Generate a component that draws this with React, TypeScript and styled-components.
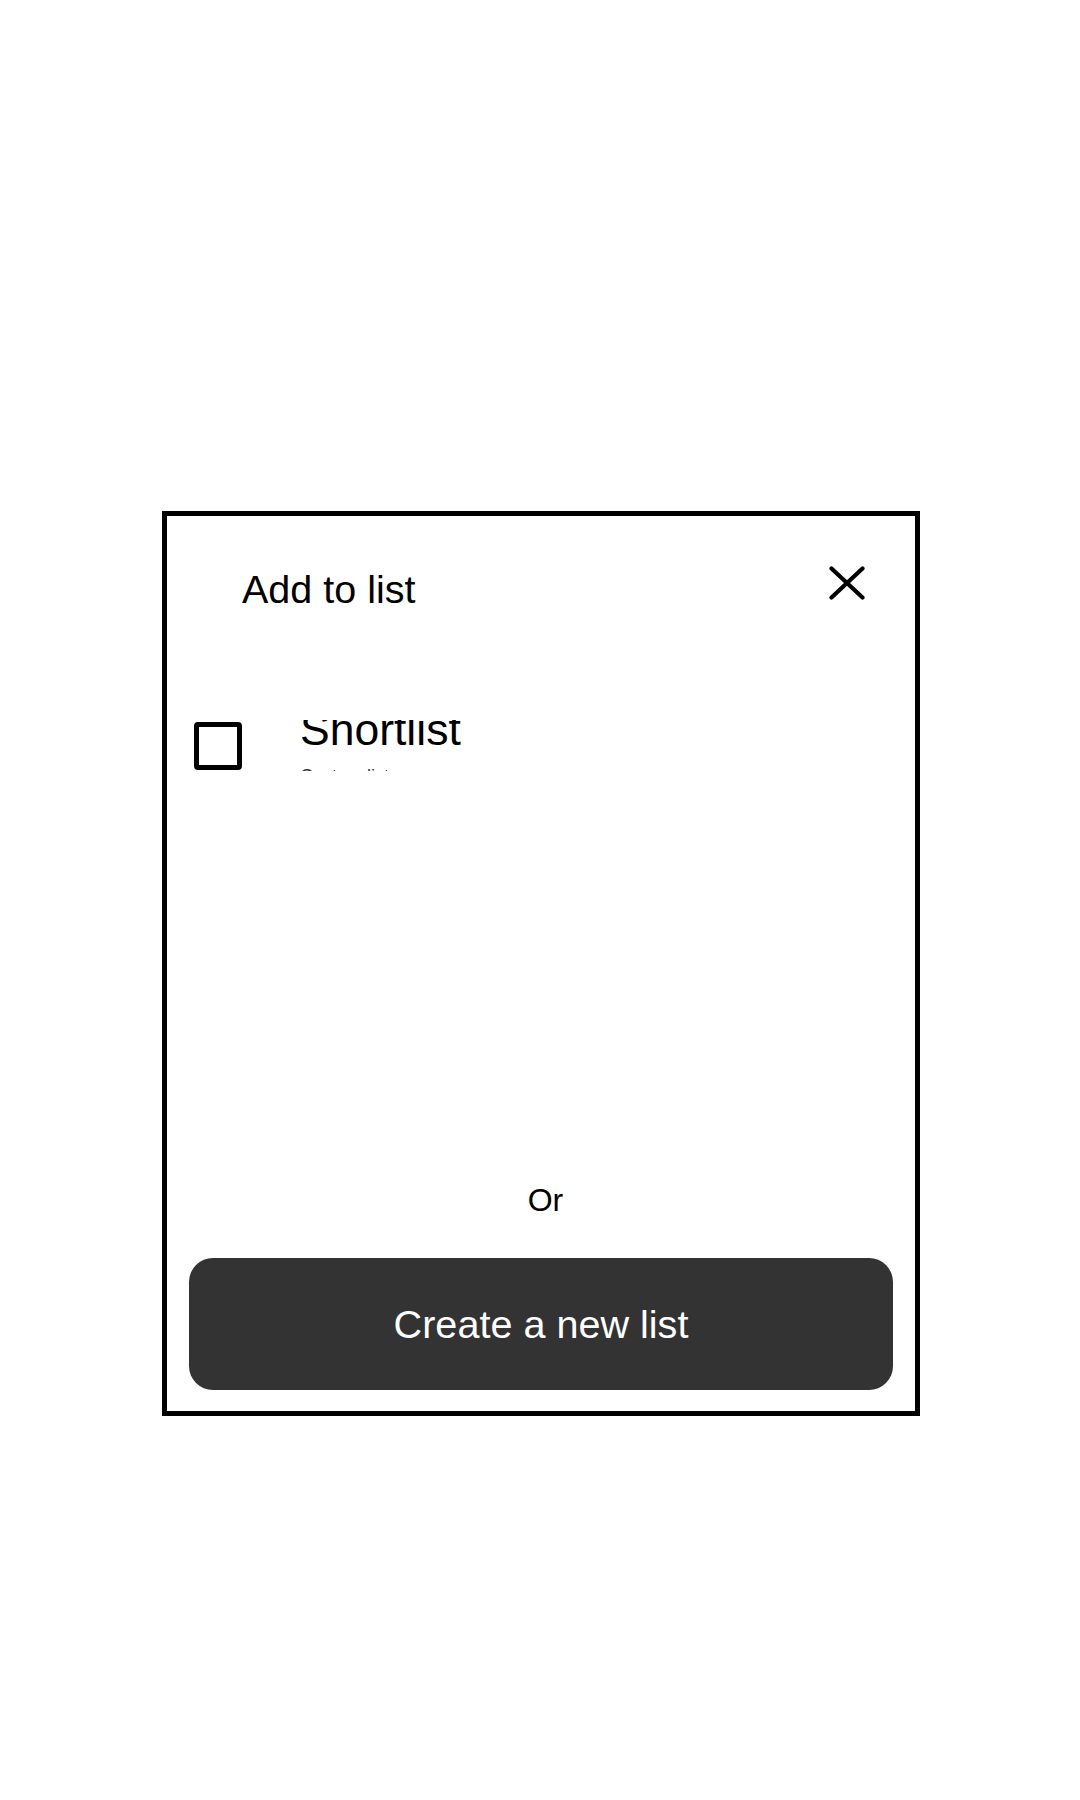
import { useState } from 'react';
import styled, { createGlobalStyle } from 'styled-components';

const GlobalStyle = createGlobalStyle`
    html, body {
        margin: 0;
        padding: 0;
        background: #fff;
    }
    body {
        font-family: 'Liberation Sans', Arial, sans-serif;
        color: #000;
    }
    * {
        box-sizing: border-box;
    }
`;

const Page = styled.div`
    min-height: 1800px;
    padding: 511px 0 0 2px;
    display: flex;
    justify-content: center;
    align-items: flex-start;
`;

const Dialog = styled.div`
    width: 758px;
    height: 905px;
    border: 5px solid #000;
    background: #fff;
    display: flex;
    flex-direction: column;
`;

const Header = styled.div`
    display: flex;
    justify-content: space-between;
    align-items: flex-start;
    padding: 51px 50px 0 75px;
`;

const Title = styled.h2`
    margin: 0;
    font-size: 39.5px;
    font-weight: 400;
    line-height: 45px;
`;

const CloseButton = styled.button`
    border: none;
    background: none;
    padding: 0;
    margin: -1px 0 0;
    width: 36px;
    height: 34px;
    cursor: pointer;
    display: flex;
`;

const ListHolder = styled.div`
    flex: 1;
    padding-top: 108px;
`;

const ListRow = styled.label`
    height: 51px;
    overflow: hidden;
    display: flex;
    align-items: flex-start;
    padding-left: 27px;
    gap: 58px;
    cursor: pointer;
`;

const CheckBox = styled.span<{ checked: boolean }>`
    flex: none;
    width: 48px;
    height: 48px;
    margin-top: 1.5px;
    border: 5px solid #000;
    border-radius: 4px;
    background: ${props => (props.checked ? '#000' : '#fff')};
`;

const ListText = styled.div`
    display: flex;
    flex-direction: column;
    margin-top: -16px;
`;

const ListName = styled.span`
    font-size: 44.5px;
    line-height: 51px;
    color: #000;
`;

const ListMeta = styled.span`
    margin-top: 11px;
    font-size: 18px;
    line-height: 21px;
    color: #333;
`;

const OrLabel = styled.div`
    text-align: center;
    font-size: 32px;
    line-height: normal;
    padding-left: 9px;
    margin-bottom: 39px;
`;

const CreateButton = styled.button`
    margin: 0 22px 21px;
    height: 132px;
    border: none;
    border-radius: 24px;
    background: #333;
    color: #fff;
    font-family: 'Liberation Sans', Arial, sans-serif;
    font-size: 39.6px;
    cursor: pointer;
`;

const lists = [{ id: 1, name: 'Shortlist', meta: 'Custom list' }];

const App: React.FC = () => {
    const [picked, setPicked] = useState<Array<number>>([]);

    const toggle = (id: number) => {
        setPicked(picked.includes(id) ? picked.filter(p => p !== id) : [...picked, id]);
    };

    return (
        <>
            <GlobalStyle />
            <Page>
                <Dialog role='dialog'>
                    <Header>
                        <Title>Add to list</Title>
                        <CloseButton aria-label='Close'>
                            <svg width='36' height='34' viewBox='0 0 36 34'>
                                <path
                                    d='M2.5 2.5L33.5 31.5M33.5 2.5L2.5 31.5'
                                    stroke='#000'
                                    strokeWidth='4.2'
                                    strokeLinecap='round'
                                    fill='none'
                                />
                            </svg>
                        </CloseButton>
                    </Header>
                    <ListHolder>
                        {lists.map(list => (
                            <ListRow key={list.id} onClick={() => toggle(list.id)}>
                                <CheckBox checked={picked.includes(list.id)} />
                                <ListText>
                                    <ListName>{list.name}</ListName>
                                    <ListMeta>{list.meta}</ListMeta>
                                </ListText>
                            </ListRow>
                        ))}
                    </ListHolder>
                    <OrLabel>Or</OrLabel>
                    <CreateButton>Create a new list</CreateButton>
                </Dialog>
            </Page>
        </>
    );
};

export default App;
